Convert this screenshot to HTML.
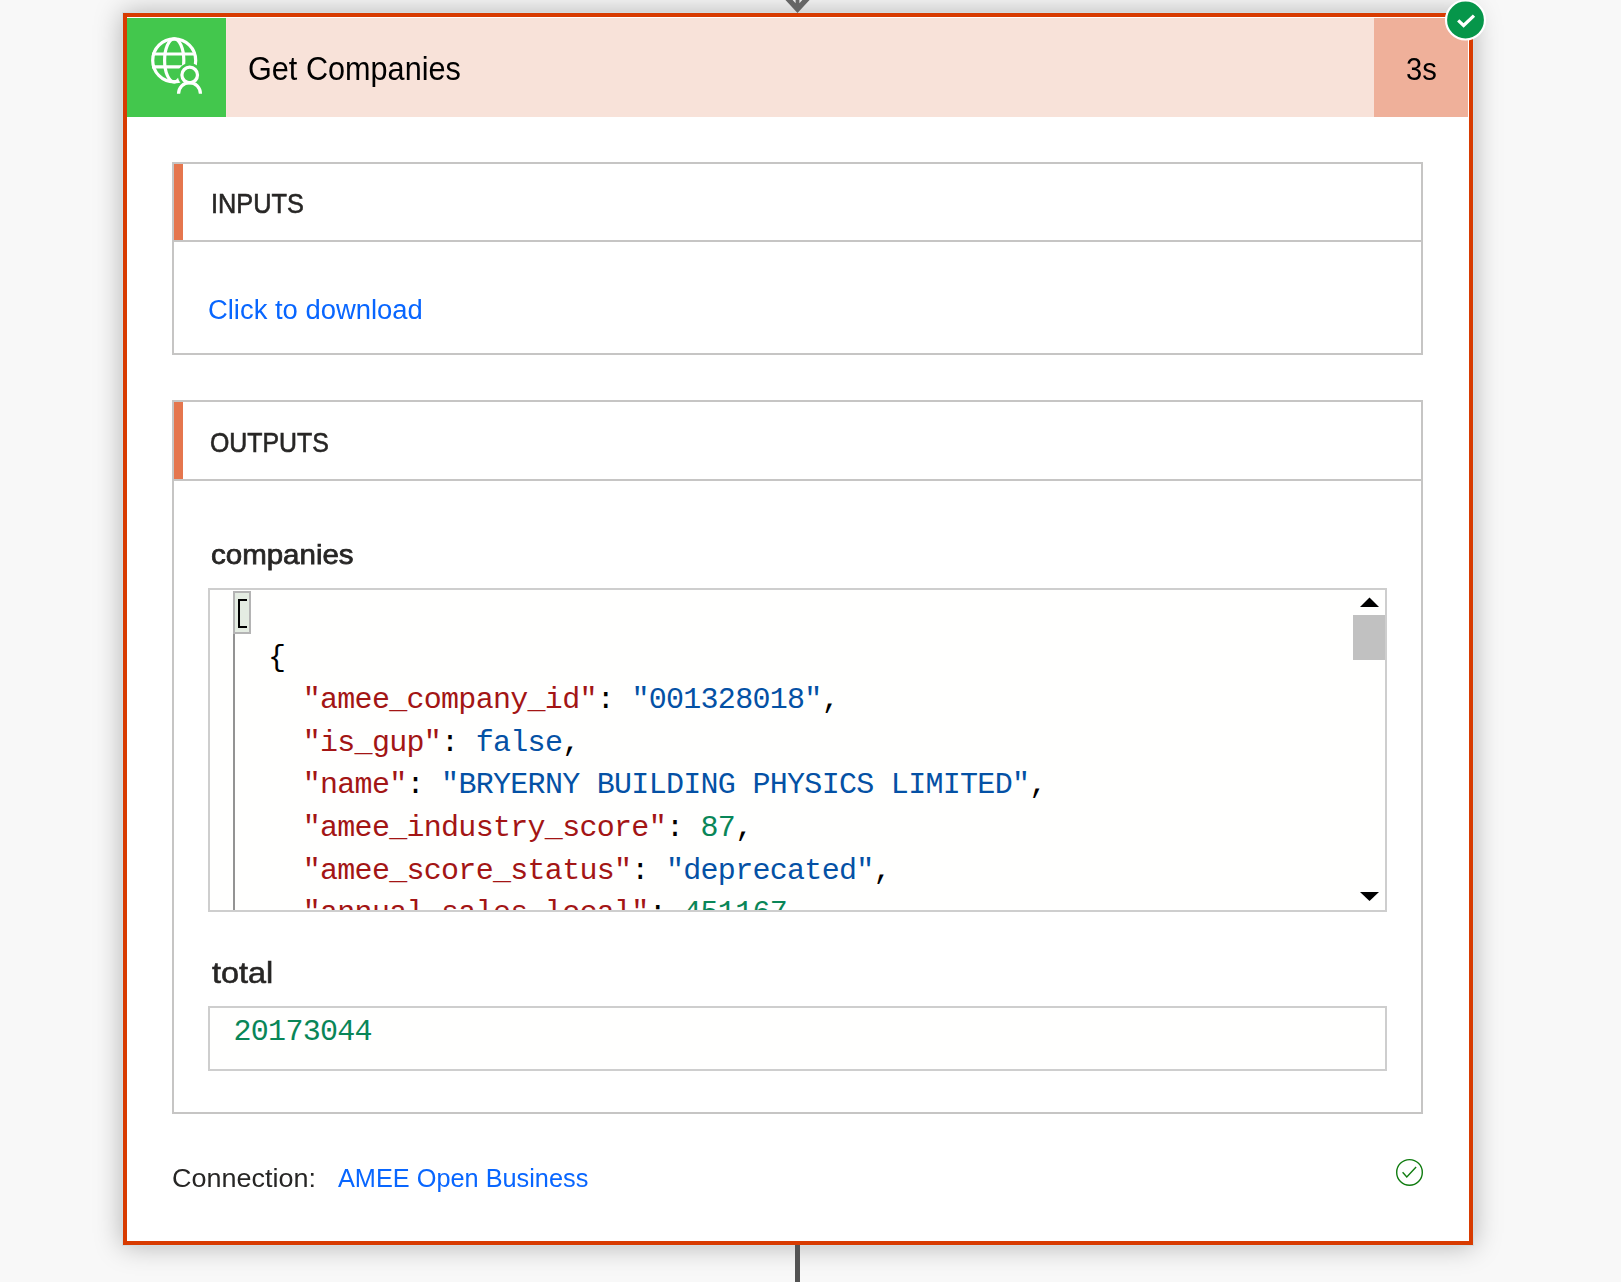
<!DOCTYPE html>
<html><head><meta charset="utf-8">
<style>
html,body{margin:0;padding:0;}
body{width:1621px;height:1282px;overflow:hidden;background:#f8f8f8;position:relative;font-family:"Liberation Sans",sans-serif;}
.a{position:absolute;}
.t{position:absolute;white-space:pre;line-height:1;}
#outline{left:122px;top:12px;width:1352px;height:1234px;background:#d3dcdf;box-shadow:0 0 26px rgba(0,0,0,0.28);}
#card{left:123px;top:13px;width:1342px;height:1224px;border:4px solid #d83b01;background:#fff;}
#green{left:127px;top:18px;width:99px;height:99px;background:#43c74d;}
#pinkline{left:226px;top:18px;width:1px;height:99px;background:#fde2df;}
#hdr{left:227px;top:18px;width:1147px;height:99px;background:#f8e2d9;}
#dur{left:1374px;top:18px;width:94px;height:99px;background:#efb09a;}
.box{position:absolute;border:2px solid #c6c5c4;background:#fff;}
.acc{position:absolute;width:9px;background:#e5764e;}
.div{position:absolute;height:2px;background:#c6c5c4;}
.sans{font-family:"Liberation Sans",sans-serif;}
.mono{font-family:"Liberation Mono",monospace;}
.ed{position:absolute;border:2px solid #cecece;background:#fffffe;overflow:hidden;}
.k{color:#a31515}.s{color:#0451a5}.n{color:#098658}.p{color:#000}
.code{position:absolute;left:233.5px;font-family:"Liberation Mono",monospace;font-size:30px;letter-spacing:-0.705px;white-space:pre;line-height:42.6px;color:#000;}
</style></head><body>

<div class="a" id="outline"></div>
<div class="a" id="card"></div>
<div class="a" id="green"></div>
<div class="a" id="pinkline"></div>
<div class="a" id="hdr"></div>
<div class="a" id="dur"></div>
<!-- connectors -->
<svg class="a" style="left:0;top:0" width="1621" height="1282">
  <polygon points="785,-0.5 797.5,13 810,-0.5 802.8,-0.5 799.4,3.2 799.4,-0.5 795.6,-0.5 795.6,3.2 792.2,-0.5" fill="#656565"/>
  <rect x="795" y="1245" width="5" height="40" fill="#535353"/>
</svg>
<!-- globe person icon -->
<svg class="a" style="left:0;top:0" width="1621" height="300">
  <defs>
    <mask id="m1">
      <rect x="0" y="0" width="1621" height="300" fill="#fff"/>
      <circle cx="189.7" cy="75.0" r="12.0" fill="#000"/>
    </mask>
  </defs>
  <g fill="none" stroke="#fff" stroke-width="3.2" mask="url(#m1)">
    <circle cx="174.2" cy="60.4" r="21.5"/>
    <ellipse cx="174.2" cy="60.4" rx="9.6" ry="21.5"/>
    <line x1="152" y1="54" x2="196" y2="54"/>
    <line x1="152" y1="66.8" x2="196" y2="66.8"/>
  </g>
  <g fill="none" stroke="#fff" stroke-width="3.25">
    <circle cx="189.7" cy="75.0" r="7.8"/>
    <path d="M178.55 93.8 A10.95 11.2 0 0 1 200.45 93.8"/>
  </g>
</svg>
<div class="t sans" id="title" style="left:247.79px;top:53.25px;font-size:32.34px;color:#000;transform:scaleX(0.9476);transform-origin:0 0;">Get Companies</div>
<div class="t sans" id="dtext" style="left:1406.37px;top:53.65px;font-size:31.72px;color:#000;transform:scaleX(0.9204);transform-origin:0 0;">3s</div>
<!-- badge -->
<svg class="a" style="left:1440px;top:-5px" width="52" height="52">
  <circle cx="25.5" cy="25" r="19.5" fill="#06964a" stroke="#fff" stroke-width="2.2"/>
  <polyline points="18.2,25.4 23.6,30.4 34.0,20.6" fill="none" stroke="#fff" stroke-width="3.3"/>
</svg>

<!-- INPUTS -->
<div class="box" style="left:172px;top:162px;width:1247px;height:189px;"></div>
<div class="acc" style="left:174px;top:164px;height:76px;"></div>
<div class="div" style="left:174px;top:240px;width:1247px;"></div>
<div class="t sans" id="inputs" style="left:210.94px;top:191.08px;font-size:27.04px;color:#272625;transform:scaleX(0.9360);transform-origin:0 0;-webkit-text-stroke:0.60px #272625;">INPUTS</div>
<div class="t sans" id="dl" style="left:207.78px;top:295.78px;font-size:27.39px;color:#0866ff;transform:scaleX(1.0006);transform-origin:0 0;">Click to download</div>

<!-- OUTPUTS -->
<div class="box" style="left:172px;top:400px;width:1247px;height:710px;"></div>
<div class="acc" style="left:174px;top:402px;height:77px;"></div>
<div class="div" style="left:174px;top:479px;width:1247px;"></div>
<div class="t sans" id="outputs" style="left:210.26px;top:430.08px;font-size:27.04px;color:#272625;transform:scaleX(0.9195);transform-origin:0 0;-webkit-text-stroke:0.60px #272625;">OUTPUTS</div>
<div class="t sans" id="companies" style="left:210.57px;top:539.73px;font-size:28.36px;color:#272625;transform:scaleX(1.0396);transform-origin:0 0;-webkit-text-stroke:0.75px #272625;">companies</div>

<div class="ed" style="left:208px;top:588px;width:1175px;height:320px;">
</div>
<div class="a" style="left:210px;top:590px;width:1175px;height:320px;overflow:hidden;">
  <div class="a" style="left:23px;top:1px;width:18px;height:43px;box-sizing:border-box;border:2px solid #b4b4b4;background:#e4ece2;"></div>
  <div class="a" style="left:23px;top:44px;width:2px;height:300px;background:#939393;"></div>
  <div class="a" style="left:28.0px;top:8.8px;width:2.2px;height:29.4px;background:#000;"></div>
  <div class="a" style="left:28.0px;top:8.8px;width:8.8px;height:2.1px;background:#000;"></div>
  <div class="a" style="left:28.0px;top:36.1px;width:8.8px;height:2.1px;background:#000;"></div>
  <div class="code" id="code" style="left:23.5px;top:4px;"><span class="p"> </span>
<span class="p">  {</span>
<span class="k">    "amee_company_id"</span><span class="p">: </span><span class="s">"001328018"</span><span class="p">,</span>
<span class="k">    "is_gup"</span><span class="p">: </span><span class="s">false</span><span class="p">,</span>
<span class="k">    "name"</span><span class="p">: </span><span class="s">"BRYERNY BUILDING PHYSICS LIMITED"</span><span class="p">,</span>
<span class="k">    "amee_industry_score"</span><span class="p">: </span><span class="n">87</span><span class="p">,</span>
<span class="k">    "amee_score_status"</span><span class="p">: </span><span class="s">"deprecated"</span><span class="p">,</span>
<span class="k">    "annual_sales_local"</span><span class="p">: </span><span class="n">451167</span><span class="p">,</span></div>
  <div class="a" style="left:1143px;top:25px;width:32px;height:45px;background:#c1c1c1;"></div>
  <svg class="a" style="left:1140px;top:0" width="35" height="320">
    <polygon points="10,17 29,17 19.5,7.5" fill="#000"/>
    <polygon points="10,302 29,302 19.5,311" fill="#000"/>
  </svg>
</div>

<div class="t sans" id="total" style="left:211.55px;top:959.26px;font-size:28.80px;color:#272625;transform:scaleX(1.1267);transform-origin:0 0;-webkit-text-stroke:0.55px #272625;">total</div>
<div class="ed" style="left:208px;top:1006px;width:1175px;height:61px;"></div>
<div class="t mono" id="num" style="left:233.5px;top:1016.5px;font-size:30px;letter-spacing:-0.705px;color:#098658;">20173044</div>

<div class="t sans" id="conn" style="left:171.95px;top:1165.35px;font-size:26.53px;color:#272625;transform:scaleX(1.0170);transform-origin:0 0;">Connection:</div>
<div class="t sans" id="amee" style="left:337.78px;top:1165.42px;font-size:26.42px;color:#0866ff;transform:scaleX(0.9581);transform-origin:0 0;">AMEE Open Business</div>
<svg class="a" style="left:1390px;top:1153px" width="40" height="40">
  <circle cx="19.5" cy="19.4" r="12.8" fill="none" stroke="#107c10" stroke-width="1.4"/>
  <polyline points="12.6,19.3 16.8,24 26.1,14.1" fill="none" stroke="#107c10" stroke-width="1.4"/>
</svg>
</body></html>
